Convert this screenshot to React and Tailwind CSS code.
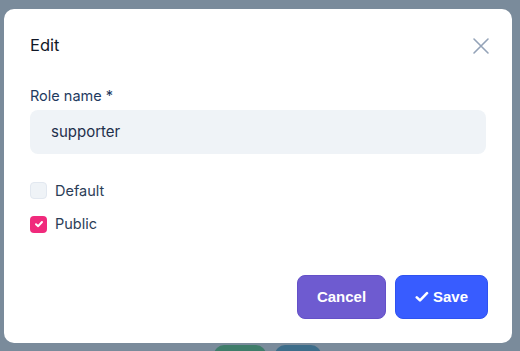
import { useState } from "react";

export default function App() {
  const [isDefault, setIsDefault] = useState(false);
  const [isPublic, setIsPublic] = useState(true);
  const [name, setName] = useState("supporter");

  return (
    <div className="relative w-[520px] h-[351px] overflow-hidden bg-[#7a8b9b] font-['Inter',sans-serif]">
      {/* page bits peeking below the modal */}
      <div className="absolute left-[214px] top-[345px] w-[52px] h-[20px] rounded-full bg-[#3f7d6a]" />
      <div className="absolute left-[275px] top-[345px] w-[46px] h-[20px] rounded-full bg-[#3d6d8a]" />

      <div className="absolute left-[4px] top-[9px] w-[508px] h-[334px] rounded-[10px] bg-white flex flex-col px-[26px] pt-[24px] pb-[24px]">
        <div className="flex items-center justify-between">
          <h2 className="text-[16.5px] font-normal text-[#111827]">Edit</h2>
          <button type="button" className="text-[#94a3b8] mr-[-4px] mt-[2px]">
            <svg width="18" height="18" viewBox="0 0 18 18" fill="none" stroke="currentColor" strokeWidth="1.6" strokeLinecap="round">
              <path d="M2 2L16 16M16 2L2 16" />
            </svg>
          </button>
        </div>

        <div className="mt-[27px] space-y-[3px]">
          <label className="block text-[14.5px] text-[#1e3a5f]">Role name *</label>
          <input
            value={name}
            onChange={(e) => setName(e.target.value)}
            className="w-full h-[44px] rounded-[8px] bg-[#eff3f7] px-[21px] text-[15px] text-[#1e2f4b] outline-none"
          />
        </div>

        <div className="mt-[26px] space-y-[12px]">
          <label className="flex items-center gap-[8px] cursor-pointer">
            <span
              onClick={() => setIsDefault(!isDefault)}
              className="w-[17px] h-[17px] rounded-[4px] bg-[#eff3f7] border border-[#e2e8f0]"
            />
            <span className="text-[14.5px] text-[#2b3d57]">Default</span>
          </label>
          <label className="flex items-center gap-[8px] cursor-pointer">
            <span
              onClick={() => setIsPublic(!isPublic)}
              className="w-[17px] h-[17px] rounded-[4px] bg-[#f02a7c] flex items-center justify-center"
            >
              {isPublic && (
                <svg width="10" height="10" viewBox="0 0 10 10" fill="none" stroke="white" strokeWidth="2" strokeLinecap="round" strokeLinejoin="round">
                  <path d="M2 5.2L4.2 7.2L8 3" />
                </svg>
              )}
            </span>
            <span className="text-[14.5px] text-[#2b3d57]">Public</span>
          </label>
        </div>

        <div className="mt-auto flex justify-end gap-[9px] mr-[-2px]">
          <button
            type="button"
            className="w-[89px] h-[44px] rounded-[8px] bg-[#6e5bd0] border border-[#6450c8] text-white text-[15px] font-bold font-['Liberation_Sans',Arial,sans-serif]"
          >
            Cancel
          </button>
          <button
            type="button"
            className="w-[93px] h-[44px] rounded-[8px] bg-[#385cff] border border-[#2f52f0] text-white text-[15px] font-bold font-['Liberation_Sans',Arial,sans-serif] flex items-center justify-center gap-[4px]"
          >
            <svg width="14" height="12" viewBox="0 0 14 12" fill="none" stroke="white" strokeWidth="2.6" strokeLinecap="round" strokeLinejoin="round">
              <path d="M1.8 6.4L5 9.4L12 2.2" />
            </svg>
            Save
          </button>
        </div>
      </div>
    </div>
  );
}
